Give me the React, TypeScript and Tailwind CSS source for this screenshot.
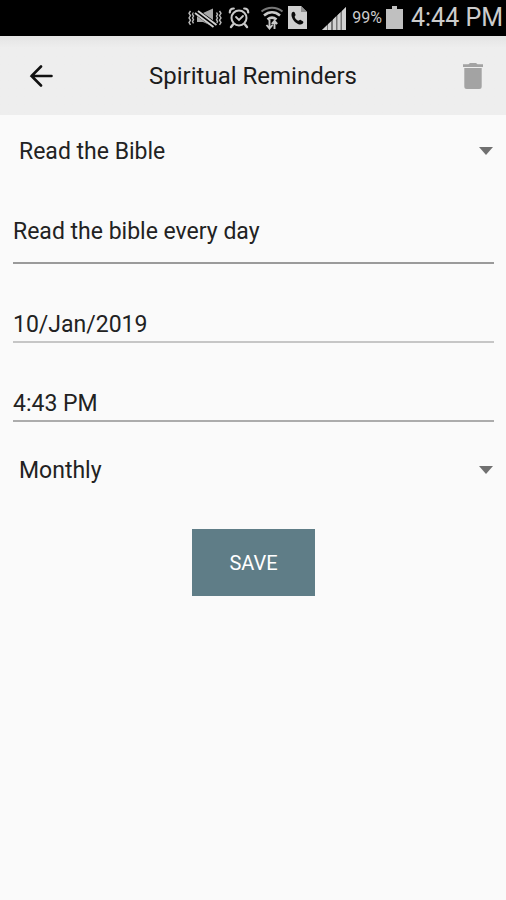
import { useState, type ReactNode } from "react";

function VibrateMuteIcon() {
  return (
    <svg width="34" height="22" viewBox="0 0 34 22" fill="none" stroke="#b9b9b9" aria-label="Vibrate">
      <path d="M2.500 4l-1.500 2.300 1.500 2.300-1.500 2.300 1.500 2.300-1.500 2.300 1.500 2.300" strokeWidth="1.400" />
      <path d="M5.500 5.500l-1 1.800 1 1.800-1 1.800 1 1.800-1 1.800 1 1.800" strokeWidth="1.400" />
      <path d="M31.500 4l1.500 2.300-1.500 2.300 1.500 2.300-1.500 2.300 1.500 2.300-1.500 2.300" strokeWidth="1.400" />
      <path d="M28.500 5.500l1 1.800-1 1.800 1 1.800-1 1.800 1 1.800-1 1.800" strokeWidth="1.400" />
      <path d="M9 6h6l10-4.500v18L15 15H9z" fill="#a8a8a8" stroke="none" />
      <path d="M7 4l21 15" stroke="#000" strokeWidth="6" />
      <path d="M7 6l18.500 14M10 4l18.500 14" strokeWidth="1.900" stroke="#d0d0d0" />
    </svg>
  );
}

function AlarmIcon() {
  return (
    <svg width="22" height="22" viewBox="0 0 22 22" fill="none" stroke="#c9c9c9" strokeLinecap="round" aria-label="Alarm">
      <circle cx="11" cy="11" r="7.500" strokeWidth="2" />
      <path d="M8 10l3 3 4-4" strokeWidth="1.800" />
      <path d="M1.800 5.500c0-2.500 1.500-4 4-4M20.200 5.500c0-2.500-1.500-4-4-4" strokeWidth="2.200" />
      <path d="M5 17.500l-2 2.500M17 17.500l2 2.500" strokeWidth="2.400" />
    </svg>
  );
}

function WifiIcon() {
  return (
    <svg width="24" height="24" viewBox="0 0 24 24" fill="none" stroke="#c9c9c9" aria-label="Wi-Fi">
      <path d="M1.500 5.500c6-5 15-5 21 0" strokeWidth="2" stroke="#777" />
      <path d="M4 9.500c5-4.200 11-4.200 16 0" strokeWidth="2.600" />
      <path d="M7.500 13.500c2.800-2.400 6.200-2.400 9 0" strokeWidth="2.600" />
      <path d="M9.500 14v8M6.500 19l3 3.500 3-3.500M14.500 23v-7.500M11.800 18l2.700-3 2.700 3" strokeWidth="1.900" />
    </svg>
  );
}

function CallFileIcon() {
  return (
    <svg width="19" height="24" viewBox="0 0 19 24" aria-label="Call">
      <path d="M0 0h13l6 6v17H0z" fill="#cfcfcf" />
      <path d="M13 0v6h6z" fill="#8f8f8f" />
      <path d="M4 6.500c1-1.200 2.200-1 2.700 0l.8 2c.3 1-.8 1.700-.8 2.400.4 1.600 2 3.300 3.700 3.900.8 0 1.300-1.300 2.200-.9l2.200 1.300c.8.600.8 1.700-.3 2.500-1.700 1.300-4.500.8-6.900-1.300C4.600 14 2.400 9.300 4 6.500z" fill="#0a0a0a" />
    </svg>
  );
}

function SignalIcon() {
  return (
    <svg width="25" height="24" viewBox="0 0 25 24" aria-label="Signal">
      <path d="M1 24L25 1v23z" fill="#777" />
      <path d="M1 24l5-4.800V24zM7 24v-5.700l3-2.900V24zM12 24V13.500l3-2.900V24zM16.500 24V9.200l3-2.900V24zM21 24V4.900L25 1v23z" fill="#d2d2d2" />
    </svg>
  );
}

function BatteryIcon() {
  return (
    <svg width="17" height="24" viewBox="0 0 17 24" aria-label="Battery">
      <path d="M6 0h5v3h6v20H0V3h6z" fill="#c0c0c0" />
    </svg>
  );
}

function StatusBar() {
  return (
    <div className="flex h-9 items-center justify-end bg-black pr-[3px] text-[#cccccc]">
      <VibrateMuteIcon />
      <span className="ml-1.5 flex"><AlarmIcon /></span>
      <span className="ml-2.5 flex"><WifiIcon /></span>
      <span className="ml-1 flex"><CallFileIcon /></span>
      <span className="ml-3.5 flex"><SignalIcon /></span>
      <span className="ml-1.5 text-base">99%</span>
      <span className="ml-1 flex"><BatteryIcon /></span>
      <span className="ml-2 text-[25px]">4:44 PM</span>
    </div>
  );
}

function Header() {
  return (
    <header className="flex h-[79px] items-center justify-between bg-[#eeeeee] bg-linear-to-b from-[#e4e4e4] to-[#eeeeee] to-15% px-[13px]">
      <button type="button" aria-label="Back" className="flex h-10 w-14 items-center justify-center">
        <svg width="24" height="22" viewBox="0 0 24 22" fill="none" stroke="#111" strokeWidth="2.600" strokeLinecap="round">
          <path d="M12 1.500L2.500 11l9.500 9.500M2.500 11h20" />
        </svg>
      </button>
      <h1 className="text-2xl text-[#1c1c1c]">Spiritual Reminders</h1>
      <button type="button" aria-label="Delete" className="flex h-10 w-14 items-center justify-end pr-2.5">
        <svg width="20" height="26" viewBox="0 0 20 26" fill="#a3a3a3">
          <path d="M0 1.200h5.500L7 0h6l1.500 1.200H20V4H0z" />
          <path d="M1.300 5h17.400v18.500a2.500 2.500 0 0 1-2.500 2.500H3.800a2.500 2.500 0 0 1-2.500-2.500z" />
        </svg>
      </button>
    </header>
  );
}

function Picker({ label, options }: { label: string; options: string[] }) {
  const [value, setValue] = useState(options[0]);
  return (
    <label className="relative block">
      <select
        aria-label={label}
        value={value}
        onChange={(e) => setValue(e.target.value)}
        className="h-[72px] w-full appearance-none bg-transparent px-1.5 pt-0.5 text-[23px] text-[#222222] outline-none"
      >
        {options.map((o) => (
          <option key={o}>{o}</option>
        ))}
      </select>
      <svg className="pointer-events-none absolute top-8 right-px" width="14" height="8" viewBox="0 0 14 8" fill="#707070">
        <path d="M0 0h14L7 8z" />
      </svg>
    </label>
  );
}

function Field({ label, initial, className }: { label: string; initial: string; className: string }) {
  return (
    <input
      aria-label={label}
      type="text"
      defaultValue={initial}
      className={`block w-full border-b-2 bg-transparent text-[23px] text-[#222222] outline-none ${className}`}
    />
  );
}

function Screen({ children }: { children: ReactNode }) {
  return (
    <div className="min-h-screen bg-[#fafafa] font-['Roboto','Liberation_Sans',sans-serif]">
      {children}
    </div>
  );
}

export default function App() {
  return (
    <Screen>
      <StatusBar />
      <Header />
      <form className="flex flex-col pr-3 pl-[13px]" onSubmit={(e) => e.preventDefault()}>
        <Picker label="Reminder type" options={["Read the Bible", "Pray", "Fast"]} />
        <Field label="Description" initial="Read the bible every day" className="mt-3 h-[65px] border-[#9a9a9a] pt-0.5" />
        <Field label="Date" initial="10/Jan/2019" className="mt-[43px] h-9 border-[#c6c6c6]" />
        <Field label="Time" initial="4:43 PM" className="mt-[43px] mb-3 h-9 border-[#acacac]" />
        <Picker label="Repeat" options={["Monthly", "Weekly", "Daily"]} />
        <button type="submit" className="mt-[23px] self-center bg-[#5f7d87] px-[37px] pt-[21px] pb-[19px] text-xl leading-[27px] text-white">
          SAVE
        </button>
      </form>
    </Screen>
  );
}
